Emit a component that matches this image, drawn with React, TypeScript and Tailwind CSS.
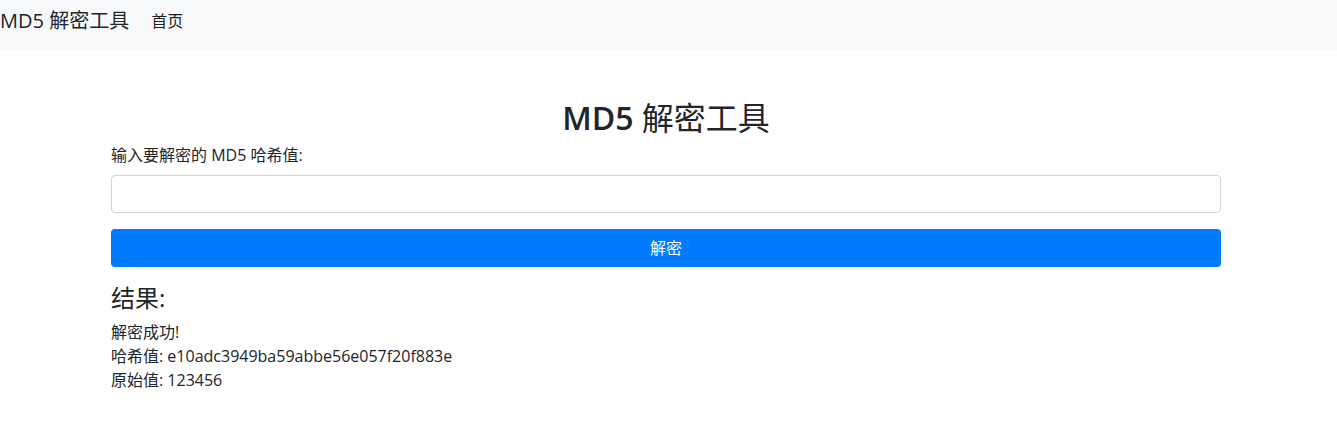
import { useState } from "react";

const font = {
  fontFamily: '"Open Sans", "Noto Sans CJK SC", sans-serif',
};

export default function App() {
  const [hash, setHash] = useState("");

  return (
    <div className="min-h-[448px] bg-white text-[#212529]" style={font}>
      <nav className="flex h-[49px] items-center bg-[#f8f9fa] pb-[8px]">
        <a href="#" className="mr-[14px] text-xl leading-[30px] text-[#212529]">
          MD5 解密工具
        </a>
        <a href="#" className="px-2 text-base leading-6 text-[rgba(0,0,0,0.9)]">
          首页
        </a>
      </nav>

      <div className="ml-[111px] mt-[50px] w-[1110px]">
        <h2 className="mb-[6px] text-center text-[32px] leading-[38px]">
          <span className="font-semibold">MD5</span>{" "}
          <span className="font-normal">解密工具</span>
        </h2>

        <div className="mb-4">
          <label className="mb-2 block text-base leading-6">
            输入要解密的 MD5 哈希值:
          </label>
          <input
            value={hash}
            onChange={(e) => setHash(e.target.value)}
            className="block h-[38px] w-full rounded border border-[#ced4da] px-3 text-base outline-none"
          />
        </div>

        <button className="block h-[38px] w-full rounded bg-[#007bff] text-base text-white">
          解密
        </button>

        <div className="mt-4">
          <h4 className="mb-2 text-2xl leading-[29px]">结果:</h4>
          <p className="text-base leading-6">
            解密成功!
            <br />
            哈希值: e10adc3949ba59abbe56e057f20f883e
            <br />
            原始值: 123456
          </p>
        </div>
      </div>
    </div>
  );
}
